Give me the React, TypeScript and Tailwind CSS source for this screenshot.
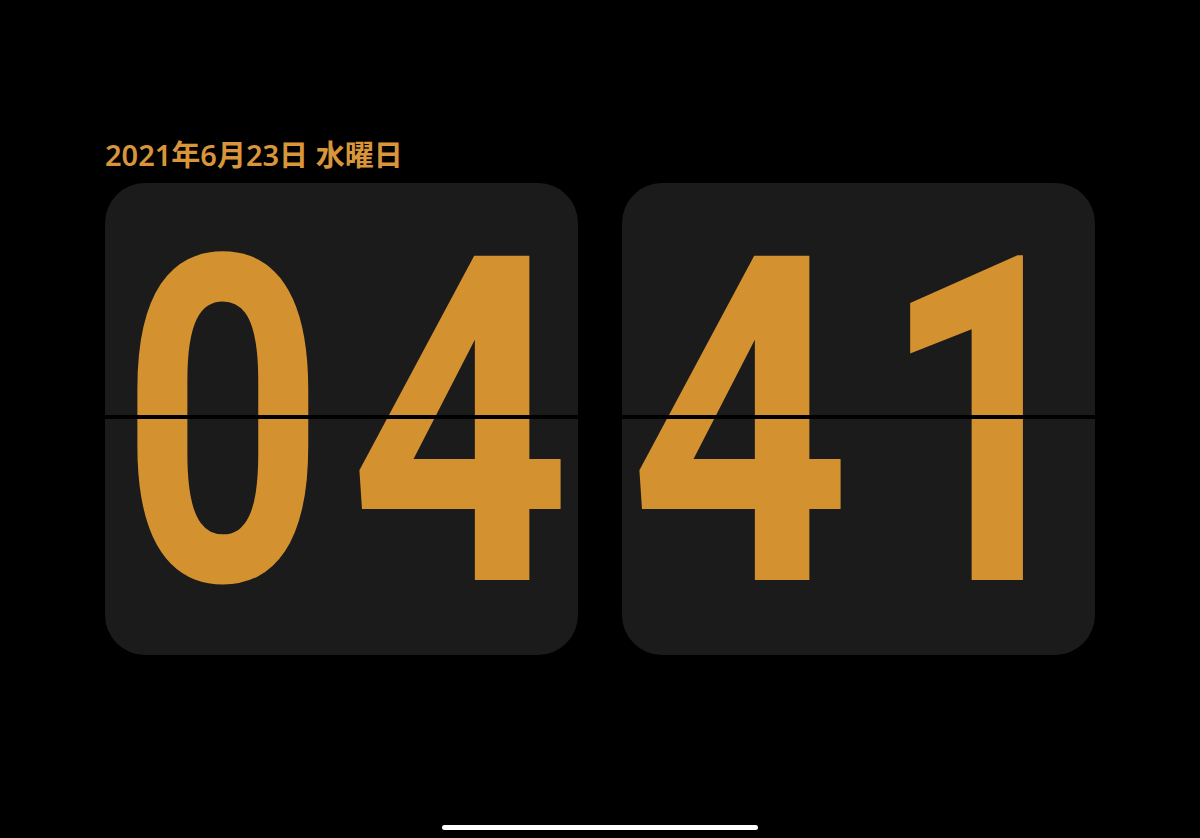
import React from "react";

const digitClass: Record<string, string> = {
  "0": "scale-x-[0.78]",
  "4": "scale-x-[0.85]",
  "1": "scale-x-[0.8] translate-x-[8px]",
};

function Digit({ d }: { d: string }) {
  return (
    <div className="flex-1 min-w-0 flex items-center justify-center">
      <span className={digitClass[d] ?? "scale-x-[0.8]"}>
        <span
          className="block shrink-0 text-[456px] leading-none translate-y-[5px] text-[#d4912f] font-bold"
          style={{ fontFamily: "Roboto, 'Liberation Sans', sans-serif" }}
        >
          {d}
        </span>
      </span>
    </div>
  );
}

function Card({ digits }: { digits: string }) {
  return (
    <div className="relative w-[473px] h-[472px] rounded-[40px] bg-[#1b1b1b] overflow-hidden flex">
      {digits.split("").map((d, i) => (
        <Digit key={i} d={d} />
      ))}
      <div className="absolute left-0 right-0 top-[232px] h-[4px] bg-black" />
    </div>
  );
}

export default function App() {
  return (
    <div className="w-[1200px] h-[838px] bg-black flex flex-col overflow-hidden">
      <div className="pl-[105px] pt-[137px] h-[183px]">
        <div
          className="text-[29px] leading-[36px] text-[#d8953a] font-semibold"
          style={{ fontFamily: "'Noto Sans', 'Noto Sans CJK JP', sans-serif" }}
        >
          2021年6月23日 水曜日
        </div>
      </div>
      <div className="flex pl-[105px] gap-[44px]">
        <Card digits="04" />
        <Card digits="41" />
      </div>
      <div className="flex-1" />
      <div className="flex justify-center pb-[8px]">
        <div className="w-[316px] h-[5px] rounded-full bg-white" />
      </div>
    </div>
  );
}
